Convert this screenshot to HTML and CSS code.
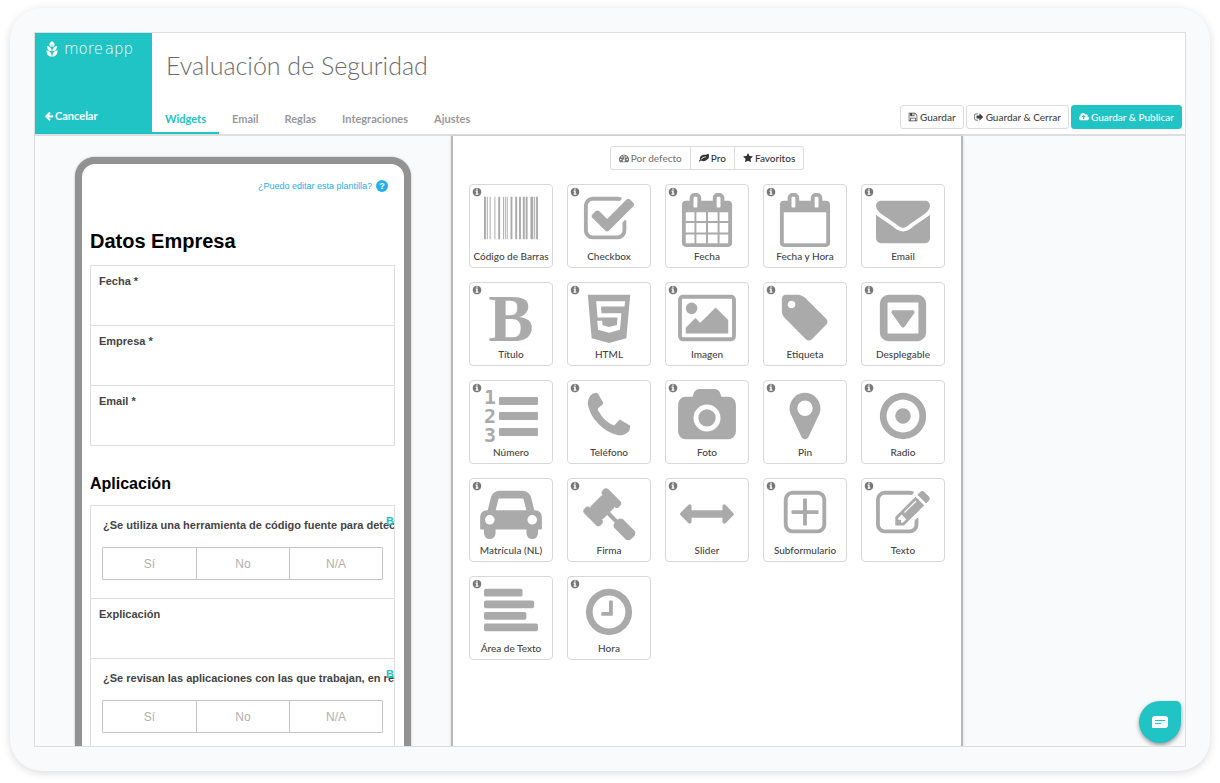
FILE: index.html
```html
<!DOCTYPE html>
<html lang="es">
<head>
<meta charset="utf-8">
<title>Evaluación de Seguridad - MoreApp</title>
<meta name="viewport" content="width=device-width, initial-scale=1">
<link rel="stylesheet" href="styles.css">
</head>
<body>
<svg class="sprite" aria-hidden="true">
  <symbol id="i-info" viewBox="0 0 1792 1792"><path d="M1152 1376v-160q0-14-9-23t-23-9h-96v-512q0-14-9-23t-23-9h-320q-14 0-23 9t-9 23v160q0 14 9 23t23 9h96v320h-96q-14 0-23 9t-9 23v160q0 14 9 23t23 9h448q14 0 23-9t9-23zm-128-896v-160q0-14-9-23t-23-9h-192q-14 0-23 9t-9 23v160q0 14 9 23t23 9h192q14 0 23-9t9-23zm640 416q0 209-103 385.5t-279.5 279.5-385.5 103-385.5-103-279.5-279.5-103-385.5 103-385.5 279.5-279.5 385.5-103 385.5 103 279.5 279.5 103 385.5z"/></symbol>
  <symbol id="i-back" viewBox="0 0 1792 1792"><path d="M1664 896v128q0 53-32.5 90.5t-84.5 37.5h-704l293 294q38 36 38 90t-38 90l-75 76q-37 37-90 37-52 0-91-37l-651-652q-37-37-37-90 0-52 37-91l651-650q38-38 91-38 52 0 90 38l75 74q38 38 38 91t-38 91l-293 293h704q52 0 84.5 37.5t32.5 90.5z"/></symbol>
  <symbol id="i-save" viewBox="0 0 1792 1792"><path d="M512 1536h768v-384h-768v384zm896 0h128v-896q0-14-10-38.5t-20-34.5l-281-281q-10-10-34-20t-39-10v416q0 40-28 68t-68 28h-576q-40 0-68-28t-28-68v-416h-128v1280h128v-416q0-40 28-68t68-28h832q40 0 68 28t28 68v416zm-384-928v-320q0-13-9.5-22.5t-22.5-9.5h-192q-13 0-22.5 9.5t-9.5 22.5v320q0 13 9.5 22.5t22.5 9.5h192q13 0 22.5-9.5t9.5-22.5zm640 32v928q0 40-28 68t-68 28h-1344q-40 0-68-28t-28-68v-1344q0-40 28-68t68-28h928q40 0 88 20t76 48l280 280q28 28 48 76t20 88z"/></symbol>
  <symbol id="i-exit" viewBox="0 0 1792 1792"><path d="M704 1440q0 4 1 20t.5 26.5-3 23.5-10 19.5-20.5 6.5h-320q-119 0-203.5-84.5t-84.5-203.5v-704q0-119 84.5-203.5t203.5-84.5h320q13 0 22.5 9.5t9.5 22.5q0 4 1 20t.5 26.5-3 23.5-10 19.5-20.5 6.5h-320q-66 0-113 47t-47 113v704q0 66 47 113t113 47h312l11.5 1 11.5 3 8 5.5 7 9 2 13.5zm928-544q0 26-19 45l-544 544q-19 19-45 19t-45-19-19-45v-288h-448q-26 0-45-19t-19-45v-384q0-26 19-45t45-19h448v-288q0-26 19-45t45-19 45 19l544 544q19 19 19 45z"/></symbol>
  <symbol id="i-cloud" viewBox="-64 0 1920 1792"><path d="M1216 864q0-14-9-23l-352-352q-9-9-23-9t-23 9l-351 351q-10 12-10 24 0 14 9 23t23 9h224v352q0 13 9.5 22.5t22.5 9.5h192q13 0 22.5-9.5t9.5-22.5v-352h224q13 0 22.5-9.5t9.5-22.5zm640 288q0 159-112.5 271.5t-271.5 112.5h-1088q-185 0-316.5-131.5t-131.5-316.5q0-130 70-240t188-165q-2-30-2-43 0-212 150-362t362-150q156 0 285.5 87t188.5 231q71-62 166-62 106 0 181 75t75 181q0 76-41 138 130 31 213.5 135.5t83.5 238.5z"/></symbol>
  <symbol id="i-gauge" viewBox="0 0 1792 1792"><path fill-rule="evenodd" d="M896 256a896 896 0 0 1 756 1377q-19 31-54 31h-1404q-35 0-54-31a896 896 0 0 1 756-1377zM320 1024a128 128 0 1 0 .1 0zm192-448a128 128 0 1 0 .1 0zm384-192a128 128 0 1 0 .1 0zm384 192a128 128 0 1 0 .1 0zm192 448a128 128 0 1 0 .1 0zm-436-268q-26-8-48 5t-29 38l-101 382q-60 5-107 43.500t-63 98.500q-20 77 20 146t117 89 146-20 89-117q16-60-6-117t-72-91l101-382q6-26-7-48.500t-40-26.500z"/></symbol>
  <symbol id="i-leaf" viewBox="0 0 1792 1792"><path d="M1280 704q0-26-19-45t-45-19q-172 0-318 49.500t-259.500 134-235.500 219.500q-19 21-19 45 0 26 19 45t45 19q24 0 45-19 27-24 74-71t67-66q137-124 268.500-176t313.500-52q26 0 45-19t19-45zm512-198q0 95-20 193-46 224-184.500 383t-357.500 268q-214 108-438 108-148 0-286-47-15-5-88-42t-96-37q-16 0-39.500 32t-45 70-52.500 70-60 32q-43 0-63.500-17.500t-45.500-59.500q-2-4-6-11t-5.500-10-3-9.500-1.500-13.500q0-35 31-73.500t68-65.500 68-56 31-48q0-4-14-38t-16-44q-9-51-9-104 0-115 43.500-220t119-184.500 170.500-139 204-95.500q55-18 145-25.500t179.500-9 178.500-6 163.500-24 113.500-56.500l29.500-29.500 29.500-28 27-20 36.500-16 43.500-4.500q39 0 70.500 46t47.500 112 24 124 8 96z"/></symbol>
  <symbol id="i-star" viewBox="0 0 1792 1792"><path d="M1728 647q0 22-26 48l-363 354 86 500q1 7 1 20 0 21-10.500 35.500t-30.500 14.500q-19 0-40-12l-449-236-449 236q-22 12-40 12-21 0-31.500-14.500t-10.500-35.500q0-6 2-20l86-500-364-354q-25-27-25-48 0-37 56-46l502-73 225-455q19-41 49-41t49 41l225 455 502 73q56 9 56 46z"/></symbol>

  <symbol id="w-barcode" viewBox="-128 0 2048 1792"><path d="M0 128h63v1408h-63zM94 128h32v1408h-32zM189 128h31v1408h-31zM346 128h31v1408h-31zM472 128h62v1408h-62zM629 128h31v1408h-31zM692 128h31v1408h-31zM755 128h31v1408h-31zM880 128h63v1408h-63zM1037 128h63v1408h-63zM1163 128h63v1408h-63zM1289 128h63v1408h-63zM1383 128h63v1408h-63zM1541 128h94v1408h-94zM1666 128h32v1408h-32zM1729 128h63v1408h-63z"/></symbol>
  <symbol id="w-check" viewBox="-128 0 2048 1792"><path d="M1472 930v318q0 119-84.500 203.500t-203.500 84.500h-832q-119 0-203.500-84.500t-84.500-203.500v-832q0-119 84.500-203.500t203.500-84.500h832q63 0 117 25 15 7 18 23 3 17-9 29l-49 49q-10 10-23 10-3 0-9-2-23-6-45-6h-832q-66 0-113 47t-47 113v832q0 66 47 113t113 47h832q66 0 113-47t47-113v-254q0-13 9-22l64-64q10-10 23-10 6 0 12 3 20 8 20 29zm231-489l-814 814q-24 24-57 24t-57-24l-430-430q-24-24-24-57t24-57l110-110q24-24 57-24t57 24l263 263 647-647q24-24 57-24t57 24l110 110q24 24 24 57t-24 57z"/></symbol>
  <symbol id="w-calendar" viewBox="-128 0 2048 1792"><path d="M192 1664h288v-288h-288v288zm352 0h320v-288h-320v288zm-352-352h288v-320h-288v320zm352 0h320v-320h-320v320zm-352-384h288v-288h-288v288zm736 736h320v-288h-320v288zm-384-736h320v-288h-320v288zm768 736h288v-288h-288v288zm-384-352h320v-320h-320v320zm-352-864v-288q0-13-9.500-22.500t-22.500-9.500h-64q-13 0-22.500 9.500t-9.500 22.500v288q0 13 9.500 22.500t22.500 9.500h64q13 0 22.500-9.500t9.500-22.500zm736 864h288v-320h-288v320zm-384-384h320v-288h-320v288zm384 0h288v-288h-288v288zm32-480v-288q0-13-9.500-22.500t-22.500-9.500h-64q-13 0-22.500 9.500t-9.500 22.500v288q0 13 9.500 22.500t22.500 9.500h64q13 0 22.500-9.500t9.500-22.500zm384-64v1280q0 52-38 90t-90 38h-1408q-52 0-90-38t-38-90v-1280q0-52 38-90t90-38h128v-96q0-66 47-113t113-47h64q66 0 113 47t47 113v96h384v-96q0-66 47-113t113-47h64q66 0 113 47t47 113v96h128q52 0 90 38t38 90z"/></symbol>
  <symbol id="w-calendar-o" viewBox="-128 0 2048 1792"><path d="M192 1664h1408v-1024h-1408v1024zm384-1216v-288q0-13-9.500-22.500t-22.500-9.500h-64q-13 0-22.500 9.500t-9.500 22.500v288q0 13 9.500 22.500t22.500 9.500h64q13 0 22.500-9.500t9.500-22.500zm768 0v-288q0-13-9.500-22.500t-22.500-9.500h-64q-13 0-22.500 9.500t-9.500 22.500v288q0 13 9.500 22.500t22.500 9.500h64q13 0 22.500-9.500t9.500-22.500zm384-64v1280q0 52-38 90t-90 38h-1408q-52 0-90-38t-38-90v-1280q0-52 38-90t90-38h128v-96q0-66 47-113t113-47h64q66 0 113 47t47 113v96h384v-96q0-66 47-113t113-47h64q66 0 113 47t47 113v96h128q52 0 90 38t38 90z"/></symbol>
  <symbol id="w-mail" viewBox="-128 0 2048 1792"><path d="M1792 710v794q0 66-47 113t-113 47h-1472q-66 0-113-47t-47-113v-794q44 49 101 87 362 246 497 345 57 42 92.500 65.500t94.500 48 110 24.500h2q51 0 110-24.500t94.500-48 92.500-65.500q170-123 498-345 57-39 100-87zm0-294q0 79-49 151t-122 123q-376 261-468 325-10 7-42.500 31t-54 38.500-52 32.500-57.500 27-50 9h-2q-23 0-50-9t-57.500-27-52-32.500-54-38.500-42.500-31q-91-64-262-182.500t-205-142.500q-62-42-117-115.500t-55-136.500q0-78 41.500-130t118.500-52h1472q65 0 112.500 47t47.500 113z"/></symbol>
  <symbol id="w-html" viewBox="-128 0 2048 1792"><path fill-rule="evenodd" d="M192 128h1408l-128 1442-576 158-576-158zM470 344l47 534h663l-22 249-262 70-214-58-14-150h-160l27 300 361 100 364-101 49-552h-663l-17-218h783l17-174z"/></symbol>
  <symbol id="w-image" viewBox="-128 0 2048 1792"><path d="M576 576q0 80-56 136t-136 56-136-56-56-136 56-136 136-56 136 56 56 136zm1024 384v448h-1408v-192l320-320 160 160 512-512zm96-704h-1600q-13 0-22.500 9.500t-9.500 22.500v1216q0 13 9.500 22.500t22.500 9.500h1600q13 0 22.500-9.500t9.500-22.500v-1216q0-13-9.500-22.500t-22.500-9.500zm160 32v1216q0 66-47 113t-113 47h-1600q-66 0-113-47t-47-113v-1216q0-66 47-113t113-47h1600q66 0 113 47t47 113z"/></symbol>
  <symbol id="w-tag" viewBox="-128 0 2048 1792"><path d="M576 448q0-53-37.500-90.500t-90.500-37.500-90.500 37.500-37.500 90.500 37.500 90.500 90.500 37.500 90.500-37.500 37.500-90.500zm1067 576q0 53-37 90l-491 492q-39 37-91 37-53 0-90-37l-715-716q-38-37-64.500-101t-26.500-117v-416q0-52 38-90t90-38h416q53 0 117 26.500t102 64.500l715 714q37 39 37 91z"/></symbol>
  <symbol id="w-select" viewBox="-128 0 2048 1792"><path fill-rule="evenodd" d="M416 128h960q119 0 203.500 84.500t84.500 203.500v960q0 119-84.500 203.500t-203.500 84.500h-960q-119 0-203.500-84.500t-84.500-203.500v-960q0-119 84.500-203.500t203.500-84.500zM384 384v1024h1024v-1024zM576 640h640q40 0 57 34t-5 67l-320 448q-19 27-52 27t-52-27l-320-448q-22-33-5-67t57-34z"/></symbol>
  <symbol id="w-phone" viewBox="-128 0 2048 1792"><path d="M1600 1240q0 27-10 70.500t-21 68.500q-21 50-122 106-94 51-186 51-27 0-52.500-3.500t-57.500-12.500-47.500-14.500-55.500-20.500-49-18q-98-35-175-83-128-79-264.500-215.500t-215.500-264.500q-48-77-83-175-3-9-18-49t-20.500-55.500-14.500-47.500-12.500-57.500-3.500-52.500q0-92 51-186 56-101 106-122 25-11 68.500-21t70.500-10q14 0 21 3 18 6 53 76 11 19 30 54t35 63.500 31 53.500q3 4 17.500 25t21.500 35.500 7 28.500q0 20-28.500 50t-62 55-62 53-28.500 46q0 9 5 22.500t8.500 20.500 14 24 11.500 19q76 137 174 235t235 174q2 1 19 11.500t24 14 20.500 8.500 22.500 5q18 0 46-28.500t53-62 55-62 50-28.500q14 0 28.500 7t35.500 21.500 25 17.500q25 15 53.500 31t63.500 35 54 30q70 35 76 53 3 7 3 21z"/></symbol>
  <symbol id="w-camera" viewBox="-128 0 2048 1792"><path d="M896 672q119 0 203.500 84.500t84.500 203.500-84.500 203.500-203.500 84.500-203.500-84.500-84.500-203.500 84.500-203.500 203.500-84.500zm704-416q106 0 181 75t75 181v896q0 106-75 181t-181 75h-1408q-106 0-181-75t-75-181v-896q0-106 75-181t181-75h224l51-136q19-49 69.500-84.500t103.500-35.500h512q53 0 103.500 35.500t69.500 84.500l51 136h224zm-704 1152q185 0 316.500-131.500t131.500-316.500-131.500-316.500-316.500-131.500-316.500 131.500-131.500 316.500 131.500 316.500 316.500 131.500z"/></symbol>
  <symbol id="w-pin" viewBox="-128 0 2048 1792"><path d="M1152 640q0-106-75-181t-181-75-181 75-75 181 75 181 181 75 181-75 75-181zm256 0q0 109-33 179l-364 774q-16 33-47.500 52t-67.500 19-67.500-19-46.500-52l-365-774q-33-70-33-179 0-212 150-362t362-150 362 150 150 362z"/></symbol>
  <symbol id="w-radio" viewBox="-128 0 2048 1792"><path fill-rule="evenodd" d="M896 128a768 768 0 1 0 .1 0zm0 224a544 544 0 1 1-.1 0zm0 288a256 256 0 1 0 .1 0z"/></symbol>
  <symbol id="w-car" viewBox="0 0 2048 1792"><path d="M480 1088q0-66-47-113t-113-47-113 47-47 113 47 113 113 47 113-47 47-113zm36-320h1016l-89-357q-2-8-14-17.500t-21-9.500h-768q-9 0-21 9.500t-14 17.500zm1372 320q0-66-47-113t-113-47-113 47-47 113 47 113 113 47 113-47 47-113zm160-96v384q0 14-9 23t-23 9h-96v128q0 80-56 136t-136 56-136-56-56-136v-128h-1024v128q0 80-56 136t-136 56-136-56-56-136v-128h-96q-14 0-23-9t-9-23v-384q0-93 65.500-158.500t158.500-65.500h28l105-419q23-94 104-157.500t179-63.500h768q98 0 179 63.500t104 157.500l105 419h28q93 0 158.500 65.500t65.500 158.500z"/></symbol>
  <symbol id="w-gavel" viewBox="-128 0 2048 1792"><path d="M1771 1536q0 53-37 90l-107 108q-39 37-91 37-53 0-90-37l-363-364q-38-36-38-90 0-53 43-96l-256-256-126 126q-14 14-34 14t-34-14q2 2 12.500 12t12.500 13 10 11.500 10 13.500 6 13.500 5.500 16.500 1.500 18q0 38-28 68-3 3-16.500 18t-19 20.500-18.500 16.500-22 15.500-22 9-26 4.500q-40 0-68-28l-408-408q-28-28-28-68 0-13 4.500-26t9-22 15.500-22 16.500-18.500 20.500-19 18-16.500q30-28 68-28 10 0 18 1.500t16.500 5.500 13.500 6 13.500 10 11.500 10 13 12.500 12 12.500q-14-14-14-34t14-34l348-348q14-14 34-14t34 14q-2-2-12.500-12t-12.500-13-10-11.500-10-13.500-6-13.500-5.500-16.500-1.500-18q0-38 28-68 3-3 16.500-18t19-20.500 18.500-16.500 22-15.500 22-9 26-4.500q40 0 68 28l408 408q28 28 28 68 0 13-4.500 26t-9 22-15.500 22-16.500 18.500-20.500 19-18 16.500q-30 28-68 28-10 0-18-1.500t-16.500-5.500-13.500-6-13.500-10-11.500-10-13-12.500-12-12.500q14 14 14 34t-14 34l-126 126 256 256q43-43 96-43 52 0 91 37l363 363q37 39 37 91z"/></symbol>
  <symbol id="w-slider" viewBox="-128 0 2048 1792"><path d="M1792 896q0 26-19 45l-256 256q-19 19-45 19t-45-19-19-45v-128h-1024v128q0 26-19 45t-45 19-45-19l-256-256q-19-19-19-45t19-45l256-256q19-19 45-19t45 19 19 45v128h1024v-128q0-26 19-45t45-19 45 19z"/></symbol>
  <symbol id="w-plus" viewBox="-128 0 2048 1792"><path d="M1344 800v64q0 14-9 23t-23 9h-352v352q0 14-9 23t-23 9h-64q-14 0-23-9t-9-23v-352h-352q-14 0-23-9t-9-23v-64q0-14 9-23t23-9h352v-352q0-14 9-23t23-9h64q14 0 23 9t9 23v352h352q14 0 23 9t9 23zm128 448v-832q0-66-47-113t-113-47h-832q-66 0-113 47t-47 113v832q0 66 47 113t113 47h832q66 0 113-47t47-113zm128-832v832q0 119-84.500 203.500t-203.500 84.500h-832q-119 0-203.500-84.500t-84.500-203.500v-832q0-119 84.500-203.500t203.500-84.500h832q119 0 203.500 84.500t84.500 203.500z"/></symbol>
  <symbol id="w-edit" viewBox="-128 0 2048 1792"><path d="M888 1184l116-116-152-152-116 116v56h96v96h56zm440-720q-16-16-33 1l-350 350q-17 17-1 33t33-1l350-350q17-17 1-33zm80 594v190q0 119-84.500 203.500t-203.500 84.500h-832q-119 0-203.500-84.500t-84.500-203.500v-832q0-119 84.500-203.500t203.500-84.500h832q63 0 117 25 15 7 18 23 3 17-9 29l-49 49q-14 14-32 8-23-6-45-6h-832q-66 0-113 47t-47 113v832q0 66 47 113t113 47h832q66 0 113-47t47-113v-126q0-13 9-22l64-64q15-15 35-7t20 29zm-96-738l288 288-672 672h-288v-288zm444 132l-92 92-288-288 92-92q28-28 68-28t68 28l152 152q28 28 28 68t-28 68z"/></symbol>
  <symbol id="w-lines" viewBox="-128 0 2048 1792"><rect y="128" width="1280" height="256" rx="64"/><rect y="512" width="1664" height="256" rx="64"/><rect y="896" width="1408" height="256" rx="64"/><rect y="1280" width="1792" height="256" rx="64"/></symbol>
  <symbol id="w-clock" viewBox="-128 0 2048 1792"><path d="M1024 544v448q0 14-9 23t-23 9h-320q-14 0-23-9t-9-23v-64q0-14 9-23t23-9h224v-352q0-14 9-23t23-9h64q14 0 23 9t9 23zm416 352q0-148-73-273t-198-198-273-73-273 73-198 198-73 273 73 273 198 198 273 73 273-73 198-198 73-273zm224 0q0 209-103 385.500t-279.500 279.500-385.500 103-385.500-103-279.500-279.500-103-385.500 103-385.500 279.500-279.500 385.500-103 385.500 103 279.500 279.500 103 385.500z"/></symbol>
</svg>

<div class="device">
  <div class="app">
    <header class="header">
      <div class="brand">
        <a class="logo" href="#">
          <svg class="logo-mark" viewBox="0 0 12 17" aria-hidden="true"><path d="M6 .3C7.800 1.300 8.700 2.600 8.700 4.100 8.700 5.300 7.800 6.100 6.400 6.500V3.500H5.600V6.500C4.200 6.100 3.300 5.300 3.300 4.100 3.300 2.600 4.200 1.300 6 .3z"/><path d="M5.700 11C2.600 11 .7 9.200.7 5.400 3.900 5.900 5.700 7.800 5.700 11zM6.300 11C9.400 11 11.300 9.200 11.300 5.400 8.100 5.900 6.300 7.800 6.300 11z"/><path d="M5.700 16.700C2.200 16.700.2 14.400.2 9.900 3.700 10.700 5.700 12.600 5.700 16.700zM6.300 16.700C9.800 16.700 11.800 14.400 11.800 9.900 8.300 10.700 6.300 12.600 6.300 16.700z"/></svg>
          <span class="logo-text"><span>more</span><span>app</span></span>
        </a>
        <a class="cancel" href="#"><svg class="icon" aria-hidden="true"><use href="#i-back"/></svg>Cancelar</a>
      </div>
      <div class="header-main">
        <h1 class="title">Evaluación de Seguridad</h1>
        <div class="header-row">
          <nav class="tabs">
            <a class="tab tab-active" href="#">Widgets</a>
            <a class="tab" href="#">Email</a>
            <a class="tab" href="#">Reglas</a>
            <a class="tab" href="#">Integraciones</a>
            <a class="tab" href="#">Ajustes</a>
          </nav>
          <div class="actions">
            <button class="btn" type="button"><svg class="icon" aria-hidden="true"><use href="#i-save"/></svg>Guardar</button>
            <button class="btn" type="button"><svg class="icon" aria-hidden="true"><use href="#i-exit"/></svg>Guardar &amp; Cerrar</button>
            <button class="btn btn-primary" type="button"><svg class="icon" aria-hidden="true"><use href="#i-cloud"/></svg>Guardar &amp; Publicar</button>
          </div>
        </div>
      </div>
    </header>

    <main class="workspace">
      <section class="preview">
        <div class="phone">
          <a class="help" href="#">¿Puedo editar esta plantilla?<span class="help-mark">?</span></a>
          <h2 class="form-title">Datos Empresa</h2>
          <div class="fields">
            <div class="field">Fecha *</div>
            <div class="field">Empresa *</div>
            <div class="field">Email *</div>
          </div>
          <h3 class="form-subtitle">Aplicación</h3>
          <div class="fields">
            <div class="field field-question">
              <p class="question">¿Se utiliza una herramienta de código fuente para detectar</p>
              <span class="rule-badge">B</span>
              <div class="choices">
                <button class="choice" type="button">Sí</button>
                <button class="choice" type="button">No</button>
                <button class="choice" type="button">N/A</button>
              </div>
            </div>
            <div class="field">Explicación</div>
            <div class="field field-question">
              <p class="question">¿Se revisan las aplicaciones con las que trabajan, en relación</p>
              <span class="rule-badge">B</span>
              <div class="choices">
                <button class="choice" type="button">Sí</button>
                <button class="choice" type="button">No</button>
                <button class="choice" type="button">N/A</button>
              </div>
            </div>
          </div>
        </div>
      </section>

      <section class="palette">
        <div class="filters">
          <button class="filter filter-active" type="button"><svg class="icon" aria-hidden="true"><use href="#i-gauge"/></svg>Por defecto</button>
          <button class="filter" type="button"><svg class="icon" aria-hidden="true"><use href="#i-leaf"/></svg>Pro</button>
          <button class="filter" type="button"><svg class="icon" aria-hidden="true"><use href="#i-star"/></svg>Favoritos</button>
        </div>
        <div class="widgets">
          <button class="widget" type="button"><svg class="info"><use href="#i-info"/></svg><svg class="glyph"><use href="#w-barcode"/></svg><span>Código de Barras</span></button>
          <button class="widget" type="button"><svg class="info"><use href="#i-info"/></svg><svg class="glyph"><use href="#w-check"/></svg><span>Checkbox</span></button>
          <button class="widget" type="button"><svg class="info"><use href="#i-info"/></svg><svg class="glyph"><use href="#w-calendar"/></svg><span>Fecha</span></button>
          <button class="widget" type="button"><svg class="info"><use href="#i-info"/></svg><svg class="glyph"><use href="#w-calendar-o"/></svg><span>Fecha y Hora</span></button>
          <button class="widget" type="button"><svg class="info"><use href="#i-info"/></svg><svg class="glyph"><use href="#w-mail"/></svg><span>Email</span></button>
          <button class="widget" type="button"><svg class="info"><use href="#i-info"/></svg><b class="glyph glyph-bold" aria-hidden="true">B</b><span>Título</span></button>
          <button class="widget" type="button"><svg class="info"><use href="#i-info"/></svg><svg class="glyph"><use href="#w-html"/></svg><span>HTML</span></button>
          <button class="widget" type="button"><svg class="info"><use href="#i-info"/></svg><svg class="glyph"><use href="#w-image"/></svg><span>Imagen</span></button>
          <button class="widget" type="button"><svg class="info"><use href="#i-info"/></svg><svg class="glyph"><use href="#w-tag"/></svg><span>Etiqueta</span></button>
          <button class="widget" type="button"><svg class="info"><use href="#i-info"/></svg><svg class="glyph"><use href="#w-select"/></svg><span>Desplegable</span></button>
          <button class="widget" type="button"><svg class="info"><use href="#i-info"/></svg><svg class="glyph" viewBox="0 0 62 54"><path d="M20 8h37q1 0 1 1v6q0 1-1 1H20q-1 0-1-1V9q0-1 1-1zM20 23h37q1 0 1 1v6q0 1-1 1H20q-1 0-1-1v-6q0-1 1-1zM20 39h37q1 0 1 1v6q0 1-1 1H20q-1 0-1-1v-6q0-1 1-1z"/><g class="digits"><text x="10" y="15">1</text><text x="10" y="34">2</text><text x="10" y="53">3</text></g></svg><span>Número</span></button>
          <button class="widget" type="button"><svg class="info"><use href="#i-info"/></svg><svg class="glyph"><use href="#w-phone"/></svg><span>Teléfono</span></button>
          <button class="widget" type="button"><svg class="info"><use href="#i-info"/></svg><svg class="glyph"><use href="#w-camera"/></svg><span>Foto</span></button>
          <button class="widget" type="button"><svg class="info"><use href="#i-info"/></svg><svg class="glyph"><use href="#w-pin"/></svg><span>Pin</span></button>
          <button class="widget" type="button"><svg class="info"><use href="#i-info"/></svg><svg class="glyph"><use href="#w-radio"/></svg><span>Radio</span></button>
          <button class="widget" type="button"><svg class="info"><use href="#i-info"/></svg><svg class="glyph"><use href="#w-car"/></svg><span>Matrícula (NL)</span></button>
          <button class="widget" type="button"><svg class="info"><use href="#i-info"/></svg><svg class="glyph"><use href="#w-gavel"/></svg><span>Firma</span></button>
          <button class="widget" type="button"><svg class="info"><use href="#i-info"/></svg><svg class="glyph"><use href="#w-slider"/></svg><span>Slider</span></button>
          <button class="widget" type="button"><svg class="info"><use href="#i-info"/></svg><svg class="glyph"><use href="#w-plus"/></svg><span>Subformulario</span></button>
          <button class="widget" type="button"><svg class="info"><use href="#i-info"/></svg><svg class="glyph"><use href="#w-edit"/></svg><span>Texto</span></button>
          <button class="widget" type="button"><svg class="info"><use href="#i-info"/></svg><svg class="glyph"><use href="#w-lines"/></svg><span>Área de Texto</span></button>
          <button class="widget" type="button"><svg class="info"><use href="#i-info"/></svg><svg class="glyph"><use href="#w-clock"/></svg><span>Hora</span></button>
        </div>
      </section>
      <aside class="properties"></aside>
    </main>

    <button class="chat" type="button" aria-label="Chat">
      <svg class="chat-icon" viewBox="0 0 16 12" aria-hidden="true"><path class="chat-bubble" d="M3 0h10a3 3 0 0 1 3 3v6a3 3 0 0 1-3 3H1a1 1 0 0 1-1-1V3a3 3 0 0 1 3-3z"/><path class="chat-lines" d="M3 4.500h10M3 7.500h6"/></svg>
    </button>
  </div>
</div>
</body>
</html>
```

FILE: styles.css
```css
:root {
  --teal: #20c4c4;
  --line: #dcdee0;
  --ui: Lato, "Open Sans", sans-serif;
  --form: "Liberation Sans", Arial, sans-serif;
}

* { box-sizing: border-box; }

body {
  margin: 0;
  height: 100vh;
  padding: 8px 10px 12px;
  background: #fff;
  font-family: var(--ui);
  font-size: 10px;
  color: #444;
}

a { color: inherit; text-decoration: none; }
button { font: inherit; color: inherit; cursor: pointer; }
h1, h2, h3, p { margin: 0; }

.sprite { position: absolute; width: 0; height: 0; }

.device {
  height: 100%;
  padding: 24px;
  background: #f9fafc;
  border-radius: 32px;
  box-shadow: 0 2px 8px rgba(0, 0, 0, 0.14);
}

.app {
  position: relative;
  display: flex;
  flex-direction: column;
  height: 100%;
  overflow: hidden;
  border: 1px solid var(--line);
}

/* Header */
.header {
  display: flex;
  flex: none;
  background: #fff;
  border-bottom: 2px solid var(--line);
}

.brand {
  display: flex;
  flex-direction: column;
  justify-content: space-between;
  width: 117px;
  padding: 8px 9px 10px;
  background: var(--teal);
  color: #fff;
}

.logo { display: flex; align-items: center; gap: 6px; padding-left: 2px; }
.logo-mark { width: 12px; height: 16px; fill: #fff; }
.logo-text { display: flex; gap: 2px; font: 200 15px/16px "DejaVu Sans", sans-serif; }

.cancel {
  display: flex;
  align-items: center;
  gap: 1px;
  font-size: 11px;
  font-weight: 700;
  line-height: 16px;
}

.icon { flex: none; width: 10px; height: 10px; fill: currentColor; }

.header-main { display: flex; flex: 1; flex-direction: column; }

.title {
  padding: 14px 14px 22px;
  font-size: 25px;
  font-weight: 300;
  line-height: 36px;
  color: #6c6c6c;
}

.header-row { display: flex; justify-content: space-between; }
.tabs { display: flex; }

.tab {
  padding: 7px 13px 6px;
  border-bottom: 2px solid transparent;
  font-size: 11px;
  font-weight: 700;
  line-height: 14px;
  color: #999;
}

.tab-active { color: var(--teal); border-color: var(--teal); }

.actions { display: flex; align-items: flex-start; gap: 2px; padding-right: 3px; }

.btn {
  display: flex;
  align-items: center;
  gap: 2px;
  height: 24px;
  padding: 0 7px;
  background: #fff;
  border: 1px solid #dcdcdc;
  border-radius: 3px;
  font-weight: 500;
}

.btn-primary { background: var(--teal); border-color: var(--teal); color: #fff; }

/* Workspace */
.workspace {
  display: grid;
  flex: 1;
  grid-template-columns: 416fr 512fr 222fr;
  min-height: 0;
}

.preview { min-height: 0; padding-top: 21px; overflow: hidden; }

.phone {
  width: 336px;
  min-height: 700px;
  margin: 0 auto;
  padding: 16px 8px;
  background: #fff;
  border: 7px solid #929292;
  border-radius: 20px;
  box-shadow: 0 0 2px rgba(0, 0, 0, 0.35);
  font-family: var(--form);
}

.help {
  display: flex;
  align-items: center;
  justify-content: flex-end;
  gap: 4px;
  padding-right: 8px;
  font-size: 9px;
  line-height: 12px;
  color: #25b0ea;
}

.help-mark {
  width: 12px;
  height: 12px;
  border-radius: 50%;
  background: #25b0ea;
  color: #fff;
  font-weight: 700;
  text-align: center;
}

.form-title {
  margin-top: 37px;
  font-size: 20px;
  line-height: 24px;
  color: #000;
}

.form-subtitle {
  margin-top: 28px;
  font-size: 16px;
  line-height: 20px;
  color: #000;
}

.fields {
  display: grid;
  grid-template-columns: minmax(0, 1fr);
  gap: 1px;
  margin: 12px 1px 0 0;
  background: var(--line);
  border: 1px solid var(--line);
}

.form-subtitle + .fields { margin-top: 11px; }

.field {
  position: relative;
  min-height: 59px;
  padding: 7px 8px;
  overflow: hidden;
  background: #fff;
  font-size: 11px;
  font-weight: 700;
  line-height: 16px;
}

.field-question { padding: 11px 11px 18px; }
.question { padding-left: 1px; white-space: nowrap; }

.rule-badge {
  position: absolute;
  top: 8px;
  right: 0;
  font-size: 11px;
  line-height: 14px;
  color: var(--teal);
}

.choices {
  display: grid;
  grid-template-columns: repeat(3, 1fr);
  margin-top: 14px;
  border: 1px solid #c4c4c4;
  border-radius: 1px;
}

.choice {
  height: 31px;
  padding: 0;
  background: none;
  border: 0;
  font-size: 12px;
  font-weight: 400;
  color: #b0b0b0;
}

.choice + .choice { border-left: 1px solid #c4c4c4; }

/* Widget palette */
.palette {
  padding-top: 10px;
  background: #fff;
  border: solid #b8b8b8;
  border-width: 0 2px;
  box-shadow: 0 0 3px rgba(0, 0, 0, 0.15);
}

.filters { display: flex; justify-content: center; }

.filter {
  display: flex;
  align-items: center;
  gap: 2px;
  height: 24px;
  padding: 0 8px;
  background: #fff;
  border: 1px solid #dcdcdc;
  font-weight: 500;
  color: #333;
}

.filter + .filter { border-left: 0; }
.filter:first-child { border-radius: 3px 0 0 3px; }
.filter:last-child { border-radius: 0 3px 3px 0; }
.filter-active { color: #777; }

.widgets {
  display: grid;
  grid-template-columns: repeat(5, 84px);
  gap: 14px;
  justify-content: center;
  margin-top: 14px;
}

.widget {
  position: relative;
  display: flex;
  flex-direction: column;
  align-items: center;
  gap: 2px;
  height: 84px;
  padding: 8px 0 0;
  background: #fff;
  border: 1px solid #d8d8d8;
  border-radius: 4px;
  font-weight: 500;
  line-height: 14px;
  white-space: nowrap;
}

.info { position: absolute; top: 2px; left: 2px; width: 10px; height: 10px; fill: #777; }
.glyph { flex: none; width: 62px; height: 54px; fill: #aaa; }
.glyph-bold { font: 700 68px/54px "Liberation Serif", serif; color: #aaa; }
.digits { font: 700 20px "DejaVu Sans Mono", monospace; text-anchor: middle; }

/* Chat launcher */
.chat {
  position: absolute;
  right: 4px;
  bottom: 3px;
  display: grid;
  place-items: center;
  width: 42px;
  height: 42px;
  padding: 0;
  background: var(--teal);
  border: 0;
  border-radius: 50% 5px 50% 50%;
  box-shadow: 0 2px 4px rgba(0, 0, 0, 0.4);
}

.chat-icon { width: 16px; height: 12px; }
.chat-bubble { fill: #fff; }
.chat-lines { stroke: var(--teal); fill: none; }
```
